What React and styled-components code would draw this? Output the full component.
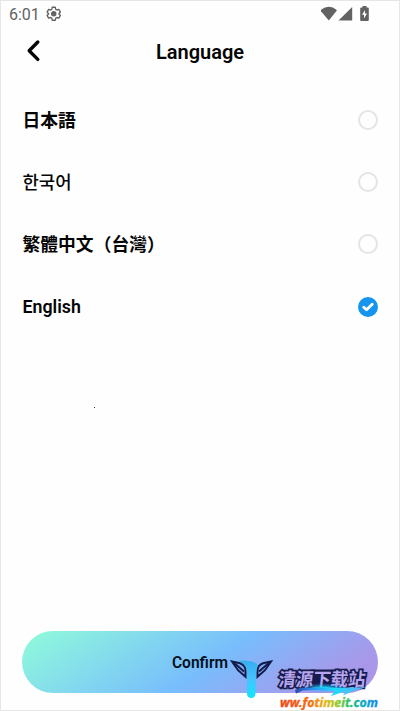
import React, { useState } from 'react';
import styled, { createGlobalStyle, css } from 'styled-components';

const GlobalStyle = createGlobalStyle`
  * {
    box-sizing: border-box;
  }

  body {
    margin: 0;
    background: #fdfdfd;
  }
`;

const Screen = styled.div`
  position: relative;
  display: flex;
  flex-direction: column;
  width: 400px;
  height: 711px;
  overflow: hidden;
  background: #fefefe;
  border: 1px solid #e6e6e6;
  color: #050505;
  font-family: Roboto, "Noto Sans CJK JP", sans-serif;
`;

const StatusBar = styled.div`
  display: flex;
  align-items: center;
  height: 25px;
  padding: 0 28px 0 8px;
  color: #626262;
`;

const Clock = styled.span`
  width: 37px;
  padding-top: 1px;
  font-size: 16px;
  line-height: 25px;
`;

const StatusIcons = styled.div`
  display: flex;
  align-items: center;
  margin-left: auto;
`;

const Header = styled.header`
  display: grid;
  grid-template-columns: 60px 1fr 60px;
  align-items: center;
  height: 50px;
`;

const BackButton = styled.button`
  display: flex;
  height: 24px;
  padding: 0 0 0 24.5px;
  border: 0;
  background: none;
  color: inherit;
`;

const Title = styled.h1`
  margin: 2px 0 0;
  font-size: 20px;
  font-weight: 600;
  line-height: 24px;
  text-align: center;
`;

const List = styled.ul`
  flex: 1;
  margin: 0;
  padding: 12.5px 21px 0 21.5px;
  list-style: none;
`;

const Row = styled.li`
  display: flex;
  align-items: center;
  justify-content: space-between;
  height: 62.3px;
  cursor: pointer;
`;

const Name = styled.span`
  padding-top: ${props => (props.$region ? '2px' : 0)};
  font-family: Roboto, "Noto Sans CJK ${props => props.$region || 'JP'}", sans-serif;
  font-size: 17.8px;
  font-weight: ${props => props.$weight};
  line-height: 24px;
`;

const Radio = styled.span`
  display: flex;
  align-items: center;
  justify-content: center;
  width: 20px;
  height: 20px;
  border: 2px solid #e4e4e4;
  border-radius: 50%;

  ${props => props.$checked && css`
    border-color: #1595ee;
    background: #1595ee;
  `}
`;

const Footer = styled.footer`
  padding: 0 21px 17px;
`;

const ConfirmButton = styled.button`
  display: block;
  width: 100%;
  height: 62px;
  padding: 2px 0 0;
  border: 0;
  border-radius: 31px;
  background: linear-gradient(145deg, #8ef6dd 5%, #78bdfd 53%, #a799ea 85%, #ad92e5 100%);
  color: #06101c;
  font-family: inherit;
  font-size: 15.6px;
  font-weight: 600;
`;

const Speck = styled.i`
  position: absolute;
  top: 406px;
  left: 93px;
  width: 1px;
  height: 1px;
  background: #333;
`;

const Watermark = styled.svg`
  position: absolute;
  top: 649px;
  left: 223px;
  overflow: visible;
  pointer-events: none;
`;

const languages = [
  { id: 'ja', name: '日本語', region: 'JP', weight: 700 },
  { id: 'ko', name: '한국어', region: 'KR', weight: 500 },
  { id: 'zh', name: '繁體中文（台灣）', region: 'TC', weight: 700 },
  { id: 'en', name: 'English', weight: 600 },
];

const GearIcon = () => (
  <svg width="15.5" height="15.5" viewBox="0 0 24 24" fill="none" stroke="currentColor" strokeWidth="2.1" strokeLinejoin="round">
    <path d="M9.6 2h4.8l.7 3.2 1.8 1 3-1 2.4 4.2-2.4 2.6 2.4 2.6-2.4 4.2-3-1-1.8 1-.7 3.2H9.6l-.7-3.2-1.8-1-3 1-2.4-4.2L4.1 12 1.7 9.4l2.4-4.2 3 1 1.8-1z" />
    <circle cx="12" cy="12" r="3.2" fill="currentColor" />
  </svg>
);

const PhoneStatus = () => (
  <svg width="50" height="16" viewBox="0 0 50 16" fill="currentColor">
    <path d="M-.8 4.3Q8-2.6 16 4.3L7.8 14.6z" />
    <path d="M17.5 14.6L31.2 1v13.6z" />
    <path fillRule="evenodd" d="M41.5 0h4v1.5h1.3q1 0 1 1v11.4q0 1-1 1h-6.6q-1 0-1-1V2.5q0-1 1-1h1.3zM44 4l-3 4.7h2V12.4l3-5h-2z" />
  </svg>
);

const WatermarkArt = () => (
  <Watermark width="160" height="60" viewBox="224 650 160 60">
    <defs>
      <linearGradient id="rainbow" x1="280" x2="378" y1="0" y2="0" gradientUnits="userSpaceOnUse">
        <stop offset="0" stopColor="#e84a1b" />
        <stop offset=".3" stopColor="#f46b14" />
        <stop offset=".46" stopColor="#e9b71d" />
        <stop offset=".58" stopColor="#9ccb28" />
        <stop offset=".72" stopColor="#20bd6d" />
        <stop offset=".86" stopColor="#12a9d1" />
        <stop offset="1" stopColor="#1685e4" />
      </linearGradient>
      <linearGradient id="beam" x1="0" x2="0" y1="661" y2="698" gradientUnits="userSpaceOnUse">
        <stop offset="0" stopColor="#35aef0" />
        <stop offset=".5" stopColor="#45c4ff" />
        <stop offset="1" stopColor="#10e5fa" />
      </linearGradient>
      <linearGradient id="slash" x1="293" x2="367" y1="0" y2="0" gradientUnits="userSpaceOnUse">
        <stop offset="0" stopColor="#2a3f9c" />
        <stop offset=".25" stopColor="#2a8cf0" />
        <stop offset=".55" stopColor="#18ddfa" />
        <stop offset="1" stopColor="#70a8f5" />
      </linearGradient>
      <radialGradient id="glow">
        <stop offset="0" stopColor="#15eaff" />
        <stop offset="1" stopColor="#22a5ff" stopOpacity="0" />
      </radialGradient>
    </defs>

    <g fill="#83a9f3" stroke="#101b49" strokeWidth="2" strokeLinejoin="miter">
      <path d="M232 661.5l8 1.7q5 2 5.5 6.5v7l-7.5-6.5z" />
      <path d="M234.5 663.2l9.5 8.3" />
      <path d="M271 661.5l-8 1.7q-5 2-5.5 6.5v7l7.5-6.5z" />
      <path d="M268.5 663.2l-9.5 8.3" />
    </g>
    <path d="M238 661q7-1 12 .3 7 1.2 8 4.2-1.5 3-2 8l-.5 20.5q-.5 4-4.3 4t-4.2-4v-22q0-8-9-11z" fill="url(#beam)" />

    <path d="M311 669.5h24v18h-26z" fill="#151b4b" />
    <text
      x="278"
      y="686"
      textLength="87"
      lengthAdjust="spacingAndGlyphs"
      transform="translate(72 0) skewX(-6)"
      fill="#b7a5ee"
      stroke="#151b4b"
      strokeWidth="3.4"
      strokeLinejoin="miter"
      strokeMiterlimit="2"
      paintOrder="stroke"
      fontFamily="'Noto Sans CJK SC', sans-serif"
      fontSize="18.5"
      fontWeight="700"
    >
      清源下载站
    </text>
    <ellipse cx="324" cy="688" rx="23" ry="5" fill="url(#glow)" />
    <path d="M295 690l5-2.2 20 .2 46-.8-14 4.3-9 4 3-4.5-15 5 4-5.2q-17-1.6-32-.4l-7 3z" fill="url(#slash)" />
    <text
      x="280"
      y="706.8"
      textLength="98"
      lengthAdjust="spacingAndGlyphs"
      fill="url(#rainbow)"
      stroke="url(#rainbow)"
      strokeWidth=".35"
      fontFamily="'Noto Sans', 'Open Sans', sans-serif"
      fontSize="12.5"
      fontStyle="italic"
      fontWeight="700"
    >
      ww.fotimeit.com
    </text>
  </Watermark>
);

const App = () => {
  const [selected, setSelected] = useState('en');

  return (
    <>
      <GlobalStyle />
      <Screen>
        <StatusBar>
          <Clock>6:01</Clock>
          <GearIcon />
          <StatusIcons>
            <PhoneStatus />
          </StatusIcons>
        </StatusBar>
        <Header>
          <BackButton aria-label="Back">
            <svg width="16" height="24" viewBox="0 0 16 24" fill="none" stroke="currentColor" strokeWidth="3.4" strokeLinecap="round" strokeLinejoin="round">
              <path d="M11.8 3L3.2 11.8l8.6 8.6" />
            </svg>
          </BackButton>
          <Title>Language</Title>
        </Header>
        <List>
          {languages.map(({ id, name, region, weight }) => (
            <Row key={id} onClick={() => setSelected(id)}>
              <Name lang={id} $region={region} $weight={weight}>{name}</Name>
              <Radio $checked={selected === id}>
                {selected === id && (
                  <svg width="12" height="10" viewBox="0 0 12 10" fill="none" stroke="#fff" strokeWidth="2.8" strokeLinecap="round" strokeLinejoin="round">
                    <path d="M1.8 5.2l2.7 2.6 5.7-5.6" />
                  </svg>
                )}
              </Radio>
            </Row>
          ))}
        </List>
        <Footer>
          <ConfirmButton>Confirm</ConfirmButton>
        </Footer>
        <Speck />
        <WatermarkArt />
      </Screen>
    </>
  );
};

export default App;
